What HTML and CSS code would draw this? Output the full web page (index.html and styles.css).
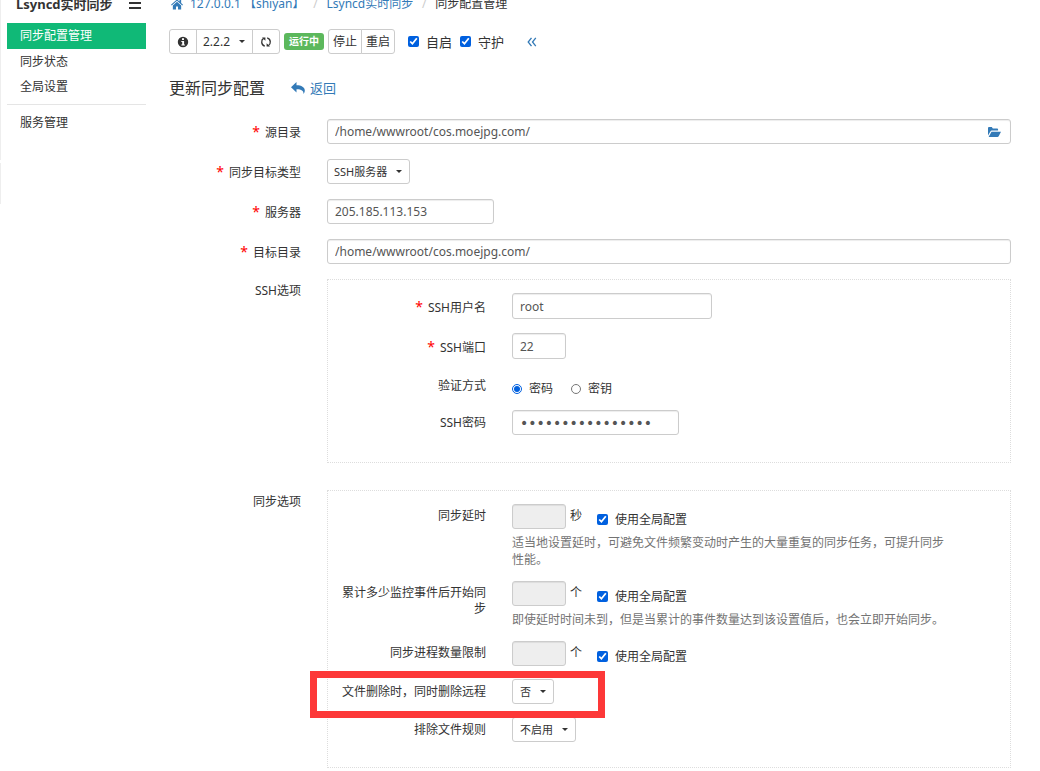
FILE: index.html
```html
<!DOCTYPE html>
<html lang="zh-CN">
<head>
<meta charset="utf-8">
<title>Lsyncd实时同步</title>
<link rel="stylesheet" href="styles.css">
</head>
<body>
<div class="page">
  <aside class="sidebar">
    <div class="rail"><span class="rail-top"></span><span class="rail-bottom"></span></div>
    <div class="side-content">
      <div class="side-head">
        <strong class="side-title">Lsyncd实时同步</strong>
        <button class="menu-toggle" type="button" aria-label="菜单"><span></span><span></span><span></span></button>
      </div>
      <nav class="side-nav">
        <a class="side-link active" href="#">同步配置管理</a>
        <a class="side-link" href="#">同步状态</a>
        <a class="side-link" href="#">全局设置</a>
        <hr class="side-rule">
        <a class="side-link" href="#">服务管理</a>
      </nav>
    </div>
  </aside>

  <main class="main">
    <nav class="breadcrumb">
      <a class="crumb home" href="#"><svg class="home-icon" viewBox="0 0 13 12" aria-hidden="true"><path d="M6.5 1 0 6.8l.8.8 5.7-5 5.7 5 .8-.8-2-1.8V1.5H9.2v1.8z"/><path d="M6.5 3.6 2 7.5V12h3.4V8.6h2.2V12H11V7.5z"/></svg>127.0.0.1 【shiyan】</a>
      <span class="slash">/</span>
      <a class="crumb" href="#">Lsyncd实时同步</a>
      <span class="slash">/</span>
      <span class="current">同步配置管理</span>
    </nav>

    <div class="toolbar">
      <div class="btn-group">
        <button class="btn icon-btn" type="button" aria-label="信息"><svg viewBox="0 0 12 12" aria-hidden="true"><path fill-rule="evenodd" d="M6 .8a5.2 5.2 0 1 0 0 10.4A5.2 5.2 0 0 0 6 .8zM5 2.3h2v1.6H5zM4.3 4.9h2.8v3.6h.8v1.1H4.3V8.500h.9V6h-.9z"/></svg></button>
        <span class="select-wrap joined"><select class="select version" aria-label="版本"><option>2.2.2</option></select><i class="caret"></i></span>
        <button class="btn icon-btn" type="button" aria-label="刷新"><svg viewBox="0 0 12 12" aria-hidden="true"><path class="line" d="M4.800 10.200C.8 9 1 3.800 3.600 2.400M7.200 1.800c4 1.200 3.800 6.400 1.200 7.800"/><path d="M2 1.400h3.400v3.400zM10 10.600H6.600V7.200z"/></svg></button>
      </div>
      <span class="badge">运行中</span>
      <div class="btn-group">
        <button class="btn" type="button">停止</button>
        <button class="btn" type="button">重启</button>
      </div>
      <div class="toggles">
        <label class="toggle"><input class="check" type="checkbox" checked>自启</label>
        <label class="toggle"><input class="check" type="checkbox" checked>守护</label>
      </div>
      <a class="collapse" href="#" aria-label="收起"><svg viewBox="0 0 10 10" aria-hidden="true"><path d="M4.500.8 1.200 5l3.300 4.200M8.800.8 5.500 5l3.300 4.200"/></svg></a>
    </div>

    <div class="heading">
      <h1 class="title">更新同步配置</h1>
      <a class="back" href="#"><svg viewBox="0 0 14 12" aria-hidden="true"><path d="M5.500 0v3.200c5 0 8.300 2 8.300 5.200 0 1.500-.6 2.600-1.300 3.600.2-3.300-2.200-4.800-7-4.700v3.200L0 5.200z"/></svg>返回</a>
    </div>

    <form class="form">
      <div class="row">
        <label class="label required" for="src"><b class="req">*</b>源目录</label>
        <div class="path">
          <input class="input" id="src" type="text" value="/home/wwwroot/cos.moejpg.com/">
          <button class="folder" type="button" aria-label="选择目录"><svg viewBox="0 0 13 10" aria-hidden="true"><path d="M0 8.600V1Q0 0 1 0h2.800l1 1.500h4.400q.9 0 .9.900v1.200H3.800q-.9 0-1.400.9z"/><path d="M3.500 4.800H13L10.800 9.100q-.4.9-1.400.9H.6z"/></svg></button>
        </div>
      </div>
      <div class="row">
        <label class="label required" for="kind"><b class="req">*</b>同步目标类型</label>
        <span class="select-wrap"><select class="select kind" id="kind"><option>SSH服务器</option></select><i class="caret"></i></span>
      </div>
      <div class="row">
        <label class="label required" for="server"><b class="req">*</b>服务器</label>
        <input class="input medium" id="server" type="text" value="205.185.113.153">
      </div>
      <div class="row">
        <label class="label required" for="dst"><b class="req">*</b>目标目录</label>
        <input class="input" id="dst" type="text" value="/home/wwwroot/cos.moejpg.com/">
      </div>

      <div class="row">
        <span class="label top" id="ssh-label">SSH选项</span>
        <div class="panel ssh" role="group" aria-labelledby="ssh-label">
          <div class="sub-row">
            <label class="label required" for="user"><b class="req">*</b>SSH用户名</label>
            <input class="input tall wide" id="user" type="text" value="root">
          </div>
          <div class="sub-row">
            <label class="label required" for="port"><b class="req">*</b>SSH端口</label>
            <input class="input tall small" id="port" type="text" value="22">
          </div>
          <div class="sub-row auth">
            <span class="label" id="auth-label">验证方式</span>
            <div class="radios" role="radiogroup" aria-labelledby="auth-label">
              <label class="toggle"><input class="radio" type="radio" name="auth" checked>密码</label>
              <label class="toggle"><input class="radio" type="radio" name="auth">密钥</label>
            </div>
          </div>
          <div class="sub-row">
            <label class="label" for="pass">SSH密码</label>
            <input class="input medium password" id="pass" type="password" value="0123456789abcdef">
          </div>
        </div>
      </div>

      <div class="row last">
        <span class="label top" id="sync-label">同步选项</span>
        <div class="panel sync" role="group" aria-labelledby="sync-label">
          <div class="sub-row">
            <label class="label sub-top" for="delay">同步延时</label>
            <div class="field">
              <div class="amount"><input class="input small" id="delay" type="text" disabled><span class="unit">秒</span><label class="toggle global"><input class="check" type="checkbox" checked>使用全局配置</label></div>
              <p class="help">适当地设置延时，可避免文件频繁变动时产生的大量重复的同步任务，可提升同步性能。</p>
            </div>
          </div>
          <div class="sub-row">
            <label class="label sub-top" for="events">累计多少监控事件后开始同步</label>
            <div class="field">
              <div class="amount"><input class="input small" id="events" type="text" disabled><span class="unit">个</span><label class="toggle global"><input class="check" type="checkbox" checked>使用全局配置</label></div>
              <p class="help">即使延时时间未到，但是当累计的事件数量达到该设置值后，也会立即开始同步。</p>
            </div>
          </div>
          <div class="sub-row">
            <label class="label sub-top" for="procs">同步进程数量限制</label>
            <div class="amount"><input class="input small" id="procs" type="text" disabled><span class="unit">个</span><label class="toggle global"><input class="check" type="checkbox" checked>使用全局配置</label></div>
          </div>
          <div class="sub-row marked">
            <label class="label" for="remove">文件删除时，同时删除远程</label>
            <span class="select-wrap"><select class="select remove" id="remove"><option>否</option></select><i class="caret"></i></span>
            <span class="marker"></span>
          </div>
          <div class="sub-row">
            <label class="label" for="exclude">排除文件规则</label>
            <span class="select-wrap"><select class="select exclude" id="exclude"><option>不启用</option></select><i class="caret"></i></span>
          </div>
        </div>
      </div>
    </form>
  </main>
</div>
</body>
</html>
```

FILE: styles.css
```css
* { box-sizing: border-box; }

body {
  margin: 0;
  background: #fff;
  color: #333;
  font: 12px/16px "Noto Sans", "Noto Sans CJK SC", sans-serif;
}

a { color: #337ab7; text-decoration: none; }
svg { display: block; fill: currentColor; }
input, select, button { font: inherit; color: inherit; margin: 0; }
button { padding: 0; background: none; border: 0; }

.page { display: flex; align-items: flex-start; }

/* Sidebar */
.sidebar { display: flex; flex: 0 0 146px; }
.rail { display: flex; flex-direction: column; gap: 3px; width: 1px; margin-right: 6px; }
.rail-top { height: 160px; background: #eee; }
.rail-bottom { height: 41px; background: #eee; }
.side-content { flex: 1; }
.side-head { display: flex; justify-content: space-between; height: 23px; padding: 0 5px 0 9px; }
.side-title { font-size: 13px; line-height: 8px; white-space: nowrap; }
.menu-toggle { display: flex; flex-direction: column; gap: 3px; width: 12px; height: 9px; justify-content: flex-end; }
.menu-toggle span { flex: none; width: 12px; height: 2px; background: #333; }
.side-link { display: block; padding: 0 13px; line-height: 25px; color: #333; }
.side-link.active { background: #10b977; color: #fff; line-height: 26px; }
.side-rule { height: 1px; margin: 5px 0; border: 0; background: #e5e5e5; }

/* Header area */
.main { flex: 1; min-width: 0; padding: 0 29px 3px 23px; }
.breadcrumb { display: flex; height: 29px; line-height: 8px; white-space: nowrap; }
.home { display: flex; gap: 7px; padding-left: 2px; }
.home-icon { width: 12px; height: 12px; margin-top: -2px; }
.slash { width: 22px; text-align: center; color: #ccc; }
.current { color: #333; }

.toolbar { display: flex; align-items: center; height: 25px; }
.btn-group { display: flex; }
.btn { width: 34px; height: 25px; border: 1px solid #ccc; border-radius: 3px; background: #fff; font-size: 12px; }
.btn:first-child { border-radius: 3px 0 0 3px; }
.btn:last-child { margin-left: -1px; border-radius: 0 3px 3px 0; }
.btn.icon-btn { display: grid; place-items: center; width: 28px; }
.icon-btn svg { width: 12px; height: 12px; }
.line { fill: none; stroke: currentColor; stroke-width: 1.3; }
.badge { margin: 0 4px; padding: 0 5px; border-radius: 3px; background: #5cb85c; color: #fff; font-size: 10px; font-weight: bold; line-height: 17px; }
.toggles { display: flex; gap: 8px; margin-left: 13px; font-size: 13px; }
.toggle { display: flex; align-items: center; gap: 7px; white-space: nowrap; }
.check { width: 11px; height: 11px; accent-color: #0060df; }
.radio { width: 10px; height: 10px; accent-color: #0060df; }
.collapse { margin-left: 23px; }
.collapse svg { width: 10px; height: 10px; fill: none; stroke: currentColor; stroke-width: 1.3; }

.heading { display: flex; align-items: center; gap: 26px; padding: 22px 0 19px; line-height: 24px; }
.title { margin: 0; font-size: 16px; font-weight: normal; }
.back { display: flex; align-items: center; gap: 5px; font-size: 13px; }
.back svg { width: 14px; height: 12px; }

/* Form */
.form { display: flex; flex-direction: column; gap: 15px; }
.row, .sub-row { display: grid; align-items: center; column-gap: 26px; }
.row { grid-template-columns: 132px minmax(0, 1fr); }
.row.last { margin-top: 12px; }
.label { text-align: right; }
.label.required { padding-top: 2px; }
.label.top { align-self: start; padding-top: 4px; }
.label.sub-top { align-self: start; padding-top: 4px; }
.req { margin-right: 5px; color: #f00; font-size: 14px; font-weight: normal; line-height: 16px; }

.input {
  width: 100%;
  height: 25px;
  padding: 0 7px;
  border: 1px solid #ccc;
  border-radius: 3px;
  background: #fff;
  box-shadow: inset 0 1px 1px rgba(0, 0, 0, .075);
  color: #555;
}
.input:disabled { background: #eee; }
.input.tall { height: 26px; }
.input.wide { width: 200px; }
.input.medium { width: 167px; }
.input.small { width: 54px; }
.input.password { font-family: "DejaVu Sans", sans-serif; font-size: 14px; }

.path, .select-wrap { display: grid; align-items: center; }
.path > *, .select-wrap > * { grid-area: 1 / 1; }
.folder { justify-self: end; margin-right: 10px; color: #337ab7; }
.folder svg { width: 13px; height: 10px; }

.select-wrap { justify-self: start; }
.select { height: 25px; padding: 0 16px 0 6px; border: 1px solid #ccc; border-radius: 3px; background: #fff; appearance: none; }
.version { width: 57px; border-radius: 0; }
.joined { margin-left: -1px; }
.kind { width: 83px; font-size: 11px; }
.remove { width: 42px; padding-left: 7px; font-size: 11px; }
.exclude { width: 64px; padding-left: 7px; font-size: 11px; }
.caret { justify-self: end; margin-right: 8px; border: 3px solid transparent; border-top-color: #333; border-bottom: 0; pointer-events: none; }

.panel { display: flex; flex-direction: column; border: 1px dotted #ddd; padding: 13px 13px 27px; }
.sub-row { grid-template-columns: 145px minmax(0, 1fr); }
.ssh { gap: 14px; }
.ssh .auth { margin: 2px 0 -1px; }
.radios { display: flex; gap: 18px; padding-top: 6px; }

.sync { gap: 13px; padding-bottom: 25px; }
.amount { display: flex; }
.unit { padding: 4px 0 0 4px; }
.global { margin-left: 15px; padding-top: 6px; }
.help { max-width: 440px; margin: 5px 0 0; color: #737373; line-height: 17px; }

/* Highlight frame laid over the row */
.marked { position: relative; }
.marker { position: absolute; top: -8px; bottom: -14px; left: -31px; width: 295px; border: 7px solid #fd3838; pointer-events: none; z-index: 1; }
```
